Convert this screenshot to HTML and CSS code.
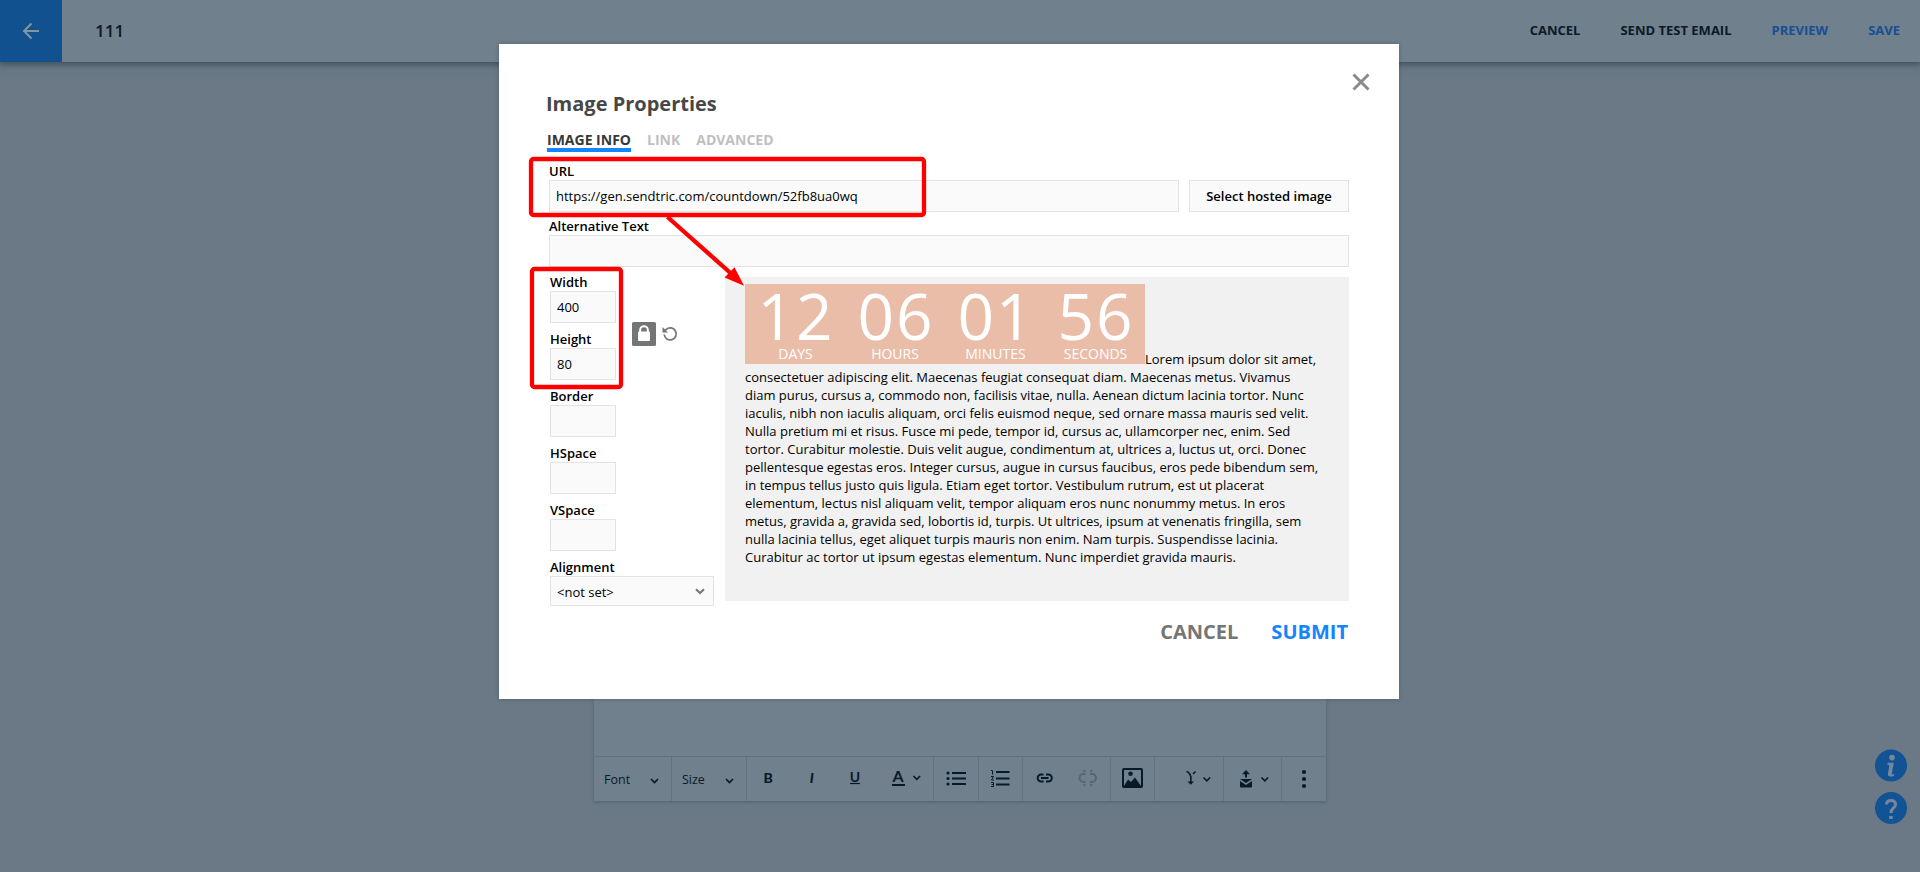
FILE: index.html
```html
<!DOCTYPE html>
<html lang="en">
  <head>
    <meta charset="utf-8">
    <title>Image Properties</title>
    <link rel="stylesheet" href="styles.css">
  </head>
  <body>
    <header class="topbar">
      <div class="back">
        <svg width="18" height="18" viewBox="0 0 18 18"><path d="M17 9H2M9.500 1.500L2 9l7.500 7.500" fill="none" stroke="#8494a2" stroke-width="2"/></svg>
      </div>
      <div class="doc-name">111</div>
      <nav class="actions">
        <span>CANCEL</span>
        <span>SEND TEST EMAIL</span>
        <span class="blue">PREVIEW</span>
        <span class="blue">SAVE</span>
      </nav>
    </header>

    <main class="page">
      <div class="editor">
        <div class="canvas"></div>
        <div class="toolbar">
          <div class="group g-font"><span>Font</span>
            <svg class="chev" width="9" height="6" viewBox="0 0 9 6"><path d="M1 1l3.500 3.500L8 1"/></svg>
          </div>
          <div class="group g-size"><span>Size</span>
            <svg class="chev" width="9" height="6" viewBox="0 0 9 6"><path d="M1 1l3.500 3.500L8 1"/></svg>
          </div>
          <div class="group g-style">
            <svg width="186" height="44" viewBox="0 0 186 44">
              <text x="16.500" y="26" class="glyph">B</text>
              <text x="62.700" y="26" class="glyph italic">I</text>
              <text x="102.800" y="25" class="glyph medium">U</text>
              <path d="M103 26.500h10" class="line thin"/>
              <text x="145.600" y="25" class="glyph medium big">A</text>
              <path d="M145 28h13" class="line"/>
              <path d="M166.500 19l3.300 3.300 3.300-3.300" class="line thin2"/>
            </svg>
          </div>
          <div class="group g-ul">
            <svg width="44" height="44" viewBox="0 0 44 44">
              <path d="M18 16h14M18 21.500h14M18 27h14" class="line"/>
              <circle cx="14" cy="16" r="1.600"/><circle cx="14" cy="21.500" r="1.600"/><circle cx="14" cy="27" r="1.600"/>
            </svg>
          </div>
          <div class="group g-ol">
            <svg width="43" height="44" viewBox="0 0 43 44">
              <path d="M17 15h13.500M17 21.500h13.500M17 27.500h13.500" class="line"/>
              <path d="M12 13.500h1.500v4M12 19.500h2.500l-2 3.500h2.500M12 25.500h2.500v4H12M12.500 27.500h2" class="line hair"/>
            </svg>
          </div>
          <div class="group g-link">
            <svg width="87" height="44" viewBox="0 0 87 44">
              <path d="M20.500 17.500h-2.300a3.500 3.500 0 0 0 0 7h2.300M23 17.500h2.300a3.500 3.500 0 0 1 0 7H23M18 21h7.500" class="line"/>
              <g class="off">
                <path d="M62.500 17h-2a4 4 0 0 0 0 8h2M67 17h2a4 4 0 0 1 0 8h-2" class="line"/>
                <path d="M60.500 13l1.500 2M69 13l-1.500 2M60.500 29l1.500-2M69 29l-1.500-2" class="line"/>
              </g>
            </svg>
          </div>
          <div class="group g-image">
            <svg width="43" height="44" viewBox="0 0 43 44">
              <rect x="12" y="12" width="19" height="18" rx="1" class="line"/>
              <circle cx="19.500" cy="16.700" r="2.300"/>
              <path d="M13 29l4-6.500 3 2.500 4-4.500 6 8.500z"/>
            </svg>
          </div>
          <div class="group g-merge">
            <svg width="68" height="44" viewBox="0 0 68 44">
              <path d="M31.500 14.500c2 0 2.500 1.500 3.500 3l.8 2v6M40.500 14.500l-2.500 2.500" class="line thin2"/>
              <path d="M32.500 24.500h6.500l-3.200 3.300z"/>
              <path d="M48.500 20.500l3.300 3.300 3.300-3.300" class="line thin2"/>
            </svg>
          </div>
          <div class="group g-inbox">
            <svg width="57" height="44" viewBox="0 0 57 44">
              <path d="M22 13l4 4.300h-3v3.200h-2v-3.200h-3z"/>
              <path d="M16 22h12l-6 4z"/>
              <path d="M16 24l6 4 6-4v5.500a1 1 0 0 1-1 1H17a1 1 0 0 1-1-1z"/>
              <path d="M37.500 20.500l3.300 3.300 3.300-3.300" class="line thin2"/>
            </svg>
          </div>
          <div class="group g-more">
            <svg width="44" height="44" viewBox="0 0 44 44"><circle cx="22" cy="15" r="2.100"/><circle cx="22" cy="22" r="2.100"/><circle cx="22" cy="29" r="2.100"/></svg>
          </div>
        </div>
      </div>
    </main>

    <div class="help">
      <svg width="32" height="33" viewBox="0 0 32 33">
        <circle cx="16" cy="16.500" r="16" fill="#115394"/>
        <circle cx="17" cy="8.600" r="2.800" fill="#75879a"/>
        <path d="M12.500 13.800h6.300l-2 10.500q-.3 1.700 2.500.8l-.5 2q-6.800 1.800-5.800-2.800l1.300-7.300q.1-1.200-1.800-1.200z" fill="#75879a"/>
      </svg>
      <svg width="32" height="33" viewBox="0 0 32 33">
        <circle cx="16" cy="16" r="16" fill="#115394"/>
        <path d="M11.500 12.500q0-4 4.500-4t4.500 4q0 2-2.300 3.700Q16 17.900 16 21" fill="none" stroke="#75879a" stroke-width="3"/>
        <rect x="14.200" y="24" width="3.500" height="3" fill="#75879a"/>
      </svg>
    </div>

    <section class="modal">
      <svg class="close" width="18" height="18" viewBox="0 0 18 18"><path d="M1.500 1.500l15 15M16.500 1.500l-15 15" stroke="#8c8c8c" stroke-width="3"/></svg>
      <h1 class="title">Image Properties</h1>
      <div class="tabs">
        <span class="tab active">IMAGE INFO</span>
        <span class="tab">LINK</span>
        <span class="tab">ADVANCED</span>
      </div>

      <div class="url-block">
        <label class="label">URL</label>
        <div class="url-row">
          <div class="input url">https://gen.sendtric.com/countdown/52fb8ua0wq</div>
          <div class="input hosted">Select hosted image</div>
        </div>
      </div>
      <div class="alt-block">
        <label class="label">Alternative Text</label>
        <div class="input"></div>
      </div>

      <div class="columns">
        <div class="left">
          <div class="fields">
            <div class="field"><label class="label">Width</label><div class="input small">400</div></div>
            <div class="field"><label class="label">Height</label><div class="input small">80</div></div>
            <div class="field"><label class="label">Border</label><div class="input small"></div></div>
            <div class="field"><label class="label">HSpace</label><div class="input small"></div></div>
            <div class="field"><label class="label">VSpace</label><div class="input small"></div></div>
            <div class="field"><label class="label">Alignment</label>
              <div class="input select"><span>&lt;not set&gt;</span>
                <svg width="10" height="7" viewBox="0 0 10 7"><path d="M1 1.200l4 3.800 4-3.800" fill="none" stroke="#757575" stroke-width="2"/></svg>
              </div>
            </div>
          </div>
          <div class="ratio">
            <svg width="24" height="24" viewBox="0 0 24 24">
              <rect width="24" height="24" rx="1.500" fill="#757575"/>
              <path d="M8.200 11V7.500a3.800 3.300 0 0 1 7.600 0V11" fill="none" stroke="#fff" stroke-width="2"/>
              <rect x="6" y="9.500" width="12" height="9.500" rx="1" fill="#fff"/>
            </svg>
            <svg width="16" height="16" viewBox="0 0 16 16">
              <path d="M2.200 8.500a6 6 0 1 0 2-5.100L1.800 5.200" fill="none" stroke="#757575" stroke-width="1.800"/>
              <path d="M.5 1v5.500H6z" fill="#757575"/>
            </svg>
          </div>
        </div>

        <div class="preview">
          <svg class="timer" width="400" height="80" viewBox="0 0 400 80">
            <rect width="400" height="80" fill="#eabda9"/>
            <g class="digits">
              <text x="51" y="56">12</text>
              <text x="151" y="56">06</text>
              <text x="251" y="56">01</text>
              <text x="351" y="56">56</text>
            </g>
            <g class="units">
              <text x="50.500" y="75">DAYS</text>
              <text x="150" y="75">HOURS</text>
              <text x="250.500" y="75">MINUTES</text>
              <text x="350.500" y="75">SECONDS</text>
            </g>
          </svg>Lorem ipsum dolor sit amet,<br>
          consectetuer adipiscing elit. Maecenas feugiat consequat diam. Maecenas metus. Vivamus<br>
          diam purus, cursus a, commodo non, facilisis vitae, nulla. Aenean dictum lacinia tortor. Nunc<br>
          iaculis, nibh non iaculis aliquam, orci felis euismod neque, sed ornare massa mauris sed velit.<br>
          Nulla pretium mi et risus. Fusce mi pede, tempor id, cursus ac, ullamcorper nec, enim. Sed<br>
          tortor. Curabitur molestie. Duis velit augue, condimentum at, ultrices a, luctus ut, orci. Donec<br>
          pellentesque egestas eros. Integer cursus, augue in cursus faucibus, eros pede bibendum sem,<br>
          in tempus tellus justo quis ligula. Etiam eget tortor. Vestibulum rutrum, est ut placerat<br>
          elementum, lectus nisl aliquam velit, tempor aliquam eros nunc nonummy metus. In eros<br>
          metus, gravida a, gravida sed, lobortis id, turpis. Ut ultrices, ipsum at venenatis fringilla, sem<br>
          nulla lacinia tellus, eget aliquet turpis mauris non enim. Nam turpis. Suspendisse lacinia.<br>
          Curabitur ac tortor ut ipsum egestas elementum. Nunc imperdiet gravida mauris.
        </div>
      </div>

      <div class="footer">
        <span>CANCEL</span>
        <span class="submit">SUBMIT</span>
      </div>
    </section>

    <!-- callouts -->
    <svg class="marks" width="1920" height="872" viewBox="0 0 1920 872">
      <rect x="531" y="159" width="393" height="56" rx="2.500"/>
      <rect x="532" y="269" width="89" height="118" rx="2.500"/>
      <path d="M667.500 217L731 273.500"/>
      <path class="head" d="M744 285.800L724.500 277.500 734.500 267.200z"/>
    </svg>
  </body>
</html>
```
FILE: styles.css
```css
*{
  box-sizing: border-box;
}

body{
  margin: 0;
  height: 872px;
  overflow: hidden;
  background-color: #6a7985;
  color: black;
  font-family: "Open Sans", "Noto Sans", sans-serif;
  font-size: 13px;
}

svg{
  display: block;
  flex: none;
}

/* top bar */
.topbar{
  display: flex;
  align-items: center;
  height: 62px;
  background-color: #70808c;
  box-shadow: 0 2px 6px 1px rgba(40, 55, 68, 0.6);
}

.back{
  width: 62px;
  height: 62px;
  padding: 22px 0 0 22px;
  background-color: #115190;
}

.doc-name{
  margin-left: 33px;
  padding-bottom: 2px;
  font-size: 17px;
  font-weight: 600;
  color: #0a1a29;
}

.actions{
  display: flex;
  margin-left: auto;
  margin-right: 20px;
  padding-bottom: 2px;
  gap: 40px;
  font-size: 13px;
  font-weight: 700;
  color: #0a1a29;
  white-space: nowrap;
}

.blue{
  color: #164f94;
}

/* editor */
.page{
  display: flex;
  padding: 338px 0 0 594px;
}

.editor{
  width: 732px;
  height: 401px;
  background-color: #70808c;
  box-shadow: 0 1px 3px rgba(60, 75, 90, 0.5);
}

.canvas{
  height: 356px;
}

.toolbar{
  display: flex;
  height: 45px;
  border-top: 1px solid #62727f;
  color: #0a1a29;
  font-size: 12.5px;
}

.group{
  display: flex;
  align-items: center;
  height: 44px;
  border-right: 1px solid #62727f;
  fill: #081a29;
}

.g-font{ width: 78px; padding: 1px 12px 0 10px; justify-content: space-between; }
.g-size{ width: 75px; padding: 1px 12px 0 10px; justify-content: space-between; }
.g-style{ width: 187px; }
.g-ul{ width: 45px; }
.g-ol{ width: 44px; }
.g-link{ width: 88px; }
.g-image{ width: 44px; }
.g-merge{ width: 69px; }
.g-inbox{ width: 58px; }
.g-more{ width: 44px; border-right: none; }

.chev{
  margin-top: 2px;
  fill: none;
  stroke: #081a29;
  stroke-width: 1.7;
}

.line{
  fill: none;
  stroke: #081a29;
  stroke-width: 2;
}

.thin{ stroke-width: 1.2; }
.thin2{ stroke-width: 1.6; }
.hair{ stroke-width: 1; }

.off .line{
  stroke: #576774;
}

.glyph{
  font-family: Lato, sans-serif;
  font-size: 14px;
  font-weight: 900;
}

.italic{ font-style: italic; }
.medium{ font-weight: 700; }
.big{ font-size: 16px; }

.help{
  position: absolute;
  left: 1875px;
  top: 749px;
  display: flex;
  flex-direction: column;
  gap: 10px;
}

/* dialog */
.modal{
  position: absolute;
  left: 499px;
  top: 44px;
  width: 900px;
  height: 655px;
  padding: 46px 50px 0 50px;
  background-color: white;
  box-shadow: 0 0 4px rgba(40, 55, 68, 0.4);
}

.close{
  position: absolute;
  left: 853px;
  top: 29px;
}

.title{
  margin: 0 0 0 -3px;
  height: 40px;
  line-height: 27px;
  font-size: 20px;
  font-weight: 700;
  color: #474747;
}

.tabs{
  display: flex;
  gap: 16px;
  height: 31px;
  margin-left: -2px;
  font-size: 14px;
  line-height: 20px;
  font-weight: 700;
  color: #bfbfbf;
  white-space: nowrap;
}

.tab{
  height: 22px;
}

.active{
  width: 84px;
  border-bottom: 4px solid #1485ff;
  color: #383838;
}

.label{
  display: block;
  height: 19px;
  line-height: 20px;
  font-size: 13px;
  font-weight: 600;
  white-space: nowrap;
}

.input{
  display: flex;
  align-items: center;
  height: 32px;
  padding: 0 6px;
  border: 1px solid #e3e3e3;
  background-color: #fafafa;
  white-space: nowrap;
}

.url-row{
  display: flex;
  gap: 10px;
}

.url{
  width: 630px;
}

.hosted{
  width: 160px;
  justify-content: center;
  font-weight: 600;
}

.alt-block{
  margin-top: 4px;
}

.columns{
  display: flex;
  height: 351px;
}

.left{
  display: flex;
  width: 176px;
  padding: 5px 0 0 1px;
}

.fields{
  width: 66px;
}

.field{
  height: 57px;
}

.select{
  width: 164px;
  height: 30px;
  padding: 1px 8px 0 6px;
  justify-content: space-between;
}

.ratio{
  display: flex;
  gap: 6px;
  align-items: center;
  height: 24px;
  margin: 50px 0 0 16px;
}

.preview{
  width: 624px;
  height: 324px;
  margin-top: 10px;
  padding: 7px 20px;
  background-color: #f1f1f1;
  line-height: 18px;
  white-space: nowrap;
}

.timer{
  display: inline-block;
  overflow: visible;
  vertical-align: baseline;
  fill: white;
  text-anchor: middle;
}

.digits{
  font-size: 64px;
  letter-spacing: 2px;
}

.units{
  font-size: 14px;
}

.footer{
  display: flex;
  justify-content: flex-end;
  gap: 33px;
  margin-right: 1px;
  font-size: 20px;
  line-height: 27px;
  font-weight: 700;
  color: #757575;
}

.submit{
  color: #1485ff;
}

.marks{
  position: absolute;
  left: 0;
  top: 0;
  fill: none;
  stroke: red;
  stroke-width: 4.3;
}

.marks .head{
  fill: red;
  stroke: none;
}
```
